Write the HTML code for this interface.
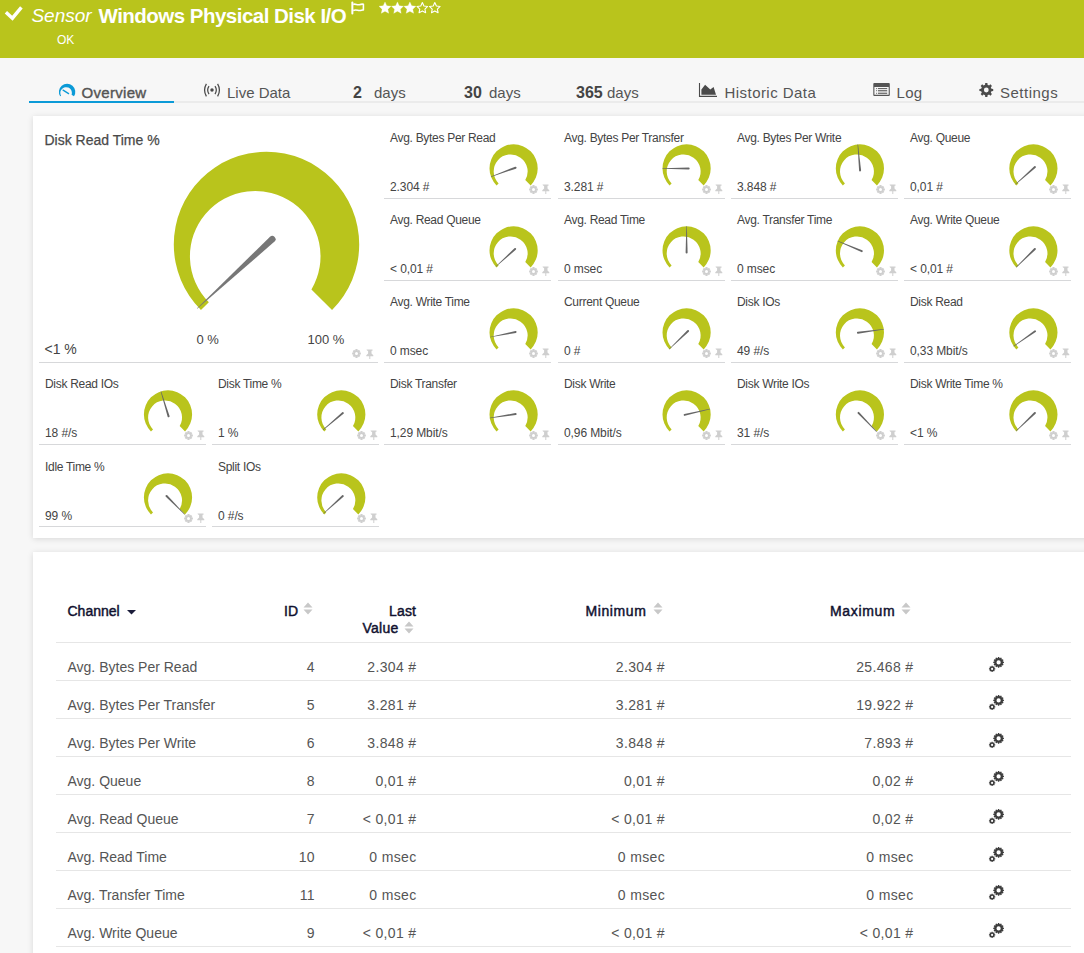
<!DOCTYPE html>
<html><head><meta charset="utf-8"><style>
html,body{margin:0;padding:0}
body{width:1084px;height:953px;overflow:hidden;background:#f7f7f7;position:relative;font-family:"Liberation Sans",sans-serif}
.a{position:absolute;white-space:nowrap;line-height:normal}
#hdr{position:absolute;left:0;top:0;width:1084px;height:58px;background:#b9c41c}
.tab{position:absolute;white-space:nowrap;font-size:15px;color:#555;top:84.4px}
.panel{position:absolute;background:#fff;box-shadow:0 1px 6px rgba(0,0,0,0.13)}
.ln{position:absolute;height:1px;width:167px;background:#d7d8da}
.tt,.tv,.bt,.bv,.bl{position:absolute;white-space:nowrap;color:#444;line-height:normal}
.tt{font-size:12px;letter-spacing:-0.3px}
.tv{font-size:12px;letter-spacing:-0.1px}
.bt{font-size:14px;color:#4a4a4a;-webkit-text-stroke:0.25px #4a4a4a}
.bv{font-size:14px}
.bl{font-size:13px}
.ic{position:absolute;fill:#cfcfcf}
.g{position:absolute;left:0;top:0}
.rc,.rr,.hh{position:absolute;white-space:nowrap;font-size:14px;color:#555;line-height:normal}
.rr{letter-spacing:0.35px}
.hh{color:#10112f;font-weight:normal;-webkit-text-stroke:0.45px #10112f;letter-spacing:0px}
.tl{position:absolute;left:56px;width:1015px;height:1px;background:#e6e6e6}
.sort,.cogs{position:absolute}
</style></head><body>
<div id="hdr"></div>
<svg class="g" width="30" height="25"><path d="M5.9 12.3L12.4 18.2L21.4 7.3" fill="none" stroke="#fff" stroke-width="3.4"/></svg>
<div class="a" style="left:31.4px;top:4.8px;font-size:19px;font-style:italic;color:#fff">Sensor</div>
<div class="a" style="left:98.5px;top:4.0px;font-size:20.5px;font-weight:bold;color:#fff;letter-spacing:-0.52px">Windows Physical Disk I/O</div>
<svg class="a" style="left:350px;top:1px" width="16" height="14" viewBox="0 0 16 14"><path d="M2.35 1.6V12.4" stroke="#fff" stroke-width="2" stroke-linecap="round"/><path d="M3.2 3.4C5.5 2.4 7 4.4 9.3 3.7S12.3 2.9 13.4 3.3V9C12.2 8.5 11 9.9 8.8 9.5S5.5 8.6 3.2 9.4" fill="none" stroke="#fff" stroke-width="1.6" stroke-linejoin="round"/></svg>
<svg class="a" style="left:378.5px;top:1px" width="64" height="14" viewBox="0 0 64 14"><path d="M6.00 0.90 L7.76 4.77 L11.99 5.25 L8.85 8.13 L9.70 12.30 L6.00 10.20 L2.30 12.30 L3.15 8.13 L0.01 5.25 L4.24 4.77Z" fill="#fff" stroke="#fff" stroke-width="0.3" stroke-linejoin="round"/><path d="M18.45 0.90 L20.21 4.77 L24.44 5.25 L21.30 8.13 L22.15 12.30 L18.45 10.20 L14.75 12.30 L15.60 8.13 L12.46 5.25 L16.69 4.77Z" fill="#fff" stroke="#fff" stroke-width="0.3" stroke-linejoin="round"/><path d="M30.90 0.90 L32.66 4.77 L36.89 5.25 L33.75 8.13 L34.60 12.30 L30.90 10.20 L27.20 12.30 L28.05 8.13 L24.91 5.25 L29.14 4.77Z" fill="#fff" stroke="#fff" stroke-width="0.3" stroke-linejoin="round"/><path d="M43.35 1.60 L44.94 5.02 L48.68 5.47 L45.92 8.03 L46.64 11.73 L43.35 9.90 L40.06 11.73 L40.78 8.03 L38.02 5.47 L41.76 5.02Z" fill="none" stroke="#fff" stroke-width="1.1" stroke-linejoin="round"/><path d="M55.80 1.60 L57.39 5.02 L61.13 5.47 L58.37 8.03 L59.09 11.73 L55.80 9.90 L52.51 11.73 L53.23 8.03 L50.47 5.47 L54.21 5.02Z" fill="none" stroke="#fff" stroke-width="1.1" stroke-linejoin="round"/></svg>
<div class="a" style="left:57px;top:32.9px;font-size:12px;color:#fff">OK</div>

<div style="position:absolute;left:29px;top:101px;width:1055px;height:2px;background:#ebebeb"></div>
<div style="position:absolute;left:29px;top:101px;width:145px;height:2px;background:#0b9ad7"></div>
<svg class="g" width="1084" height="953"><path d="M60.22 96.37 A8.20 8.20 0 1 1 73.98 96.37 L71.57 94.80 A5.78 5.78 0 1 0 61.09 95.80 Z" fill="#0b9ad7"/><path d="M63.1 90.1L68.6 93.6" stroke="#0b9ad7" stroke-width="1.3" stroke-linecap="round"/></svg>
<div class="tab" style="left:81.5px;color:#555;-webkit-text-stroke:0.4px #555;letter-spacing:0.3px">Overview</div>
<svg class="g" width="1084" height="953"><circle cx="212" cy="90.1" r="1.75" fill="#4a4a4a"/><path d="M206.4 83.9A12.3 12.3 0 0 0 206.4 96.4M217.6 83.9A12.3 12.3 0 0 1 217.6 96.4M209 86.2A7.1 7.1 0 0 0 209 94.1M215 86.2A7.1 7.1 0 0 1 215 94.1" fill="none" stroke="#4a4a4a" stroke-width="1.25"/></svg>
<div class="tab" style="left:227px">Live Data</div>
<div class="tab" style="left:353px;font-weight:bold;color:#444;font-size:16px;top:83.5px">2</div>
<div class="tab" style="left:374px">days</div>
<div class="tab" style="left:464px;font-weight:bold;color:#444;font-size:16px;top:83.5px">30</div>
<div class="tab" style="left:489px">days</div>
<div class="tab" style="left:576px;font-weight:bold;color:#444;font-size:16px;top:83.5px">365</div>
<div class="tab" style="left:607px">days</div>
<svg class="g" width="1084" height="953"><path d="M699.5 83V96.4H717" fill="none" stroke="#4a4a4a" stroke-width="1.1"/><path d="M701.4 94.7V89.4L705.1 84.8L710.3 89.6L713.6 86.9L716 94.7Z" fill="#4a4a4a"/></svg>
<div class="tab" style="left:724.5px;letter-spacing:0.45px">Historic Data</div>
<svg class="a" style="left:873px;top:83px" width="17" height="13" viewBox="0 0 17 13"><path fill="#555" fill-rule="evenodd" d="M1.2 0H15.8Q16.8 0 16.8 1V12Q16.8 12.9 15.8 12.9H1.2Q0.3 12.9 0.3 12V1Q0.3 0 1.2 0Z M1.4 3.9V11.7H15.7V3.9Z"/><path d="M3.2 5.6h0.9M5 5.6h9.2M3.2 7.7h0.9M5 7.7h9.2M3.2 10.3h0.9M5 10.3h9.2" stroke="#555" stroke-width="1"/><path d="M5 9h9.2" stroke="#bbb" stroke-width="1.4"/></svg>
<div class="tab" style="left:896.5px;letter-spacing:0.3px">Log</div>
<svg class="g" width="1084" height="953"><path fill="#4a4a4a" fill-rule="evenodd" d="M991.45 88.76 L993.21 88.90 L993.21 91.10 L991.45 91.24 L990.82 92.77 L991.96 94.11 L990.41 95.66 L989.07 94.52 L987.54 95.15 L987.40 96.91 L985.20 96.91 L985.06 95.15 L983.53 94.52 L982.19 95.66 L980.64 94.11 L981.78 92.77 L981.15 91.24 L979.39 91.10 L979.39 88.90 L981.15 88.76 L981.78 87.23 L980.64 85.89 L982.19 84.34 L983.53 85.48 L985.06 84.85 L985.20 83.09 L987.40 83.09 L987.54 84.85 L989.07 85.48 L990.41 84.34 L991.96 85.89 L990.82 87.23 Z M988.70 90.00 A2.4 2.4 0 1 0 983.90 90.00 A2.4 2.4 0 1 0 988.70 90.00 Z"/></svg>
<div class="tab" style="left:1000px;letter-spacing:0.5px">Settings</div>

<div class="panel" style="left:33px;top:116px;width:1100px;height:422px"></div>
<div class="panel" style="left:33px;top:552px;width:1100px;height:500px"></div>

<div class="ln" style="left:39px;top:362px;width:339px"></div>
<div class="bt" style="left:44.5px;top:131.9px">Disk Read Time %</div>
<div class="bv" style="left:44.5px;top:341.3px">&lt;1 %</div>
<div class="bl" style="left:196.5px;top:331.8px">0 %</div>
<div class="bl" style="left:307.5px;top:331.8px">100 %</div>
<svg class="ic" style="left:351.5px;top:348.5px" width="9" height="9" viewBox="0 0 9 9"><path fill-rule="evenodd" d="M7.72 3.40 L8.88 3.45 L8.88 5.55 L7.72 5.60 L7.55 6.00 L8.34 6.85 L6.85 8.34 L6.00 7.55 L5.60 7.72 L5.55 8.88 L3.45 8.88 L3.40 7.72 L3.00 7.55 L2.15 8.34 L0.66 6.85 L1.45 6.00 L1.28 5.60 L0.12 5.55 L0.12 3.45 L1.28 3.40 L1.45 3.00 L0.66 2.15 L2.15 0.66 L3.00 1.45 L3.40 1.28 L3.45 0.12 L5.55 0.12 L5.60 1.28 L6.00 1.45 L6.85 0.66 L8.34 2.15 L7.55 3.00 Z M6.00 4.50 A1.5 1.5 0 1 0 3.00 4.50 A1.5 1.5 0 1 0 6.00 4.50 Z"/></svg>
<svg class="ic" style="left:365px;top:348.5px" width="9" height="10" viewBox="0 0 9 10"><path d="M1.5 0.5h6v1.2h-1v2.8l1.8 1.8v1h-3v2.7h-1V7.3h-3v-1l1.8-1.8V1.7h-1z"/></svg>
<svg class="g" width="1084" height="953"><path d="M200.95 310.05 A92.70 92.70 0 1 1 332.05 310.05 L311.44 289.44 A65.29 65.29 0 1 0 208.84 302.16 Z" fill="#b9c41c"/><path d="M270.03 236.70 L196.84 308.44 L197.18 308.81 L274.55 241.61 A3.34 3.34 0 0 0 270.03 236.70 Z" fill="#777777"/></svg>
<div class="ln" style="left:384.0px;top:198px"></div>
<div class="tt" style="left:390.0px;top:130.9px">Avg. Bytes Per Read</div>
<div class="tv" style="left:390.0px;top:180.0px">2.304 #</div>
<svg class="ic" style="left:529.4px;top:184.7px" width="9" height="9" viewBox="0 0 9 9"><path fill-rule="evenodd" d="M7.72 3.40 L8.88 3.45 L8.88 5.55 L7.72 5.60 L7.55 6.00 L8.34 6.85 L6.85 8.34 L6.00 7.55 L5.60 7.72 L5.55 8.88 L3.45 8.88 L3.40 7.72 L3.00 7.55 L2.15 8.34 L0.66 6.85 L1.45 6.00 L1.28 5.60 L0.12 5.55 L0.12 3.45 L1.28 3.40 L1.45 3.00 L0.66 2.15 L2.15 0.66 L3.00 1.45 L3.40 1.28 L3.45 0.12 L5.55 0.12 L5.60 1.28 L6.00 1.45 L6.85 0.66 L8.34 2.15 L7.55 3.00 Z M6.00 4.50 A1.5 1.5 0 1 0 3.00 4.50 A1.5 1.5 0 1 0 6.00 4.50 Z"/></svg>
<svg class="ic" style="left:541.2px;top:183.9px" width="9" height="10" viewBox="0 0 9 10"><path d="M1.5 0.5h6v1.2h-1v2.8l1.8 1.8v1h-3v2.7h-1V7.3h-3v-1l1.8-1.8V1.7h-1z"/></svg>
<svg class="g" width="1084" height="953"><path d="M496.56 185.44 A24.10 24.10 0 1 1 530.64 185.44 L525.28 180.08 A16.97 16.97 0 1 0 498.61 183.39 Z" fill="#b9c41c"/><path d="M515.18 166.76 L490.87 176.41 L491.04 176.88 L515.87 168.64 A1.00 1.00 0 0 0 515.18 166.76 Z" fill="#666"/></svg>
<div class="ln" style="left:558.0px;top:198px"></div>
<div class="tt" style="left:564.0px;top:130.9px">Avg. Bytes Per Transfer</div>
<div class="tv" style="left:564.0px;top:180.0px">3.281 #</div>
<svg class="ic" style="left:702.4px;top:184.7px" width="9" height="9" viewBox="0 0 9 9"><path fill-rule="evenodd" d="M7.72 3.40 L8.88 3.45 L8.88 5.55 L7.72 5.60 L7.55 6.00 L8.34 6.85 L6.85 8.34 L6.00 7.55 L5.60 7.72 L5.55 8.88 L3.45 8.88 L3.40 7.72 L3.00 7.55 L2.15 8.34 L0.66 6.85 L1.45 6.00 L1.28 5.60 L0.12 5.55 L0.12 3.45 L1.28 3.40 L1.45 3.00 L0.66 2.15 L2.15 0.66 L3.00 1.45 L3.40 1.28 L3.45 0.12 L5.55 0.12 L5.60 1.28 L6.00 1.45 L6.85 0.66 L8.34 2.15 L7.55 3.00 Z M6.00 4.50 A1.5 1.5 0 1 0 3.00 4.50 A1.5 1.5 0 1 0 6.00 4.50 Z"/></svg>
<svg class="ic" style="left:714.2px;top:183.9px" width="9" height="10" viewBox="0 0 9 10"><path d="M1.5 0.5h6v1.2h-1v2.8l1.8 1.8v1h-3v2.7h-1V7.3h-3v-1l1.8-1.8V1.7h-1z"/></svg>
<svg class="g" width="1084" height="953"><path d="M669.56 185.44 A24.10 24.10 0 1 1 703.64 185.44 L698.28 180.08 A16.97 16.97 0 1 0 671.61 183.39 Z" fill="#b9c41c"/><path d="M688.65 167.40 L662.50 168.15 L662.50 168.65 L688.65 169.40 A1.00 1.00 0 0 0 688.65 167.40 Z" fill="#666"/></svg>
<div class="ln" style="left:731.0px;top:198px"></div>
<div class="tt" style="left:737.0px;top:130.9px">Avg. Bytes Per Write</div>
<div class="tv" style="left:737.0px;top:180.0px">3.848 #</div>
<svg class="ic" style="left:875.7px;top:184.7px" width="9" height="9" viewBox="0 0 9 9"><path fill-rule="evenodd" d="M7.72 3.40 L8.88 3.45 L8.88 5.55 L7.72 5.60 L7.55 6.00 L8.34 6.85 L6.85 8.34 L6.00 7.55 L5.60 7.72 L5.55 8.88 L3.45 8.88 L3.40 7.72 L3.00 7.55 L2.15 8.34 L0.66 6.85 L1.45 6.00 L1.28 5.60 L0.12 5.55 L0.12 3.45 L1.28 3.40 L1.45 3.00 L0.66 2.15 L2.15 0.66 L3.00 1.45 L3.40 1.28 L3.45 0.12 L5.55 0.12 L5.60 1.28 L6.00 1.45 L6.85 0.66 L8.34 2.15 L7.55 3.00 Z M6.00 4.50 A1.5 1.5 0 1 0 3.00 4.50 A1.5 1.5 0 1 0 6.00 4.50 Z"/></svg>
<svg class="ic" style="left:887.5px;top:183.9px" width="9" height="10" viewBox="0 0 9 10"><path d="M1.5 0.5h6v1.2h-1v2.8l1.8 1.8v1h-3v2.7h-1V7.3h-3v-1l1.8-1.8V1.7h-1z"/></svg>
<svg class="g" width="1084" height="953"><path d="M842.86 185.44 A24.10 24.10 0 1 1 876.94 185.44 L871.58 180.08 A16.97 16.97 0 1 0 844.91 183.39 Z" fill="#b9c41c"/><path d="M861.07 170.35 L858.05 144.37 L857.55 144.41 L859.08 170.53 A1.00 1.00 0 0 0 861.07 170.35 Z" fill="#666"/></svg>
<div class="ln" style="left:904.0px;top:198px"></div>
<div class="tt" style="left:910.0px;top:130.9px">Avg. Queue</div>
<div class="tv" style="left:910.0px;top:180.0px">0,01 #</div>
<svg class="ic" style="left:1049.2px;top:184.7px" width="9" height="9" viewBox="0 0 9 9"><path fill-rule="evenodd" d="M7.72 3.40 L8.88 3.45 L8.88 5.55 L7.72 5.60 L7.55 6.00 L8.34 6.85 L6.85 8.34 L6.00 7.55 L5.60 7.72 L5.55 8.88 L3.45 8.88 L3.40 7.72 L3.00 7.55 L2.15 8.34 L0.66 6.85 L1.45 6.00 L1.28 5.60 L0.12 5.55 L0.12 3.45 L1.28 3.40 L1.45 3.00 L0.66 2.15 L2.15 0.66 L3.00 1.45 L3.40 1.28 L3.45 0.12 L5.55 0.12 L5.60 1.28 L6.00 1.45 L6.85 0.66 L8.34 2.15 L7.55 3.00 Z M6.00 4.50 A1.5 1.5 0 1 0 3.00 4.50 A1.5 1.5 0 1 0 6.00 4.50 Z"/></svg>
<svg class="ic" style="left:1061.0px;top:183.9px" width="9" height="10" viewBox="0 0 9 10"><path d="M1.5 0.5h6v1.2h-1v2.8l1.8 1.8v1h-3v2.7h-1V7.3h-3v-1l1.8-1.8V1.7h-1z"/></svg>
<svg class="g" width="1084" height="953"><path d="M1016.36 185.44 A24.10 24.10 0 1 1 1050.44 185.44 L1045.08 180.08 A16.97 16.97 0 1 0 1018.41 183.39 Z" fill="#b9c41c"/><path d="M1034.27 166.29 L1015.18 184.18 L1015.52 184.56 L1035.60 167.79 A1.00 1.00 0 0 0 1034.27 166.29 Z" fill="#666"/></svg>
<div class="ln" style="left:384.0px;top:280px"></div>
<div class="tt" style="left:390.0px;top:212.9px">Avg. Read Queue</div>
<div class="tv" style="left:390.0px;top:262.0px">&lt; 0,01 #</div>
<svg class="ic" style="left:529.4px;top:266.7px" width="9" height="9" viewBox="0 0 9 9"><path fill-rule="evenodd" d="M7.72 3.40 L8.88 3.45 L8.88 5.55 L7.72 5.60 L7.55 6.00 L8.34 6.85 L6.85 8.34 L6.00 7.55 L5.60 7.72 L5.55 8.88 L3.45 8.88 L3.40 7.72 L3.00 7.55 L2.15 8.34 L0.66 6.85 L1.45 6.00 L1.28 5.60 L0.12 5.55 L0.12 3.45 L1.28 3.40 L1.45 3.00 L0.66 2.15 L2.15 0.66 L3.00 1.45 L3.40 1.28 L3.45 0.12 L5.55 0.12 L5.60 1.28 L6.00 1.45 L6.85 0.66 L8.34 2.15 L7.55 3.00 Z M6.00 4.50 A1.5 1.5 0 1 0 3.00 4.50 A1.5 1.5 0 1 0 6.00 4.50 Z"/></svg>
<svg class="ic" style="left:541.2px;top:265.9px" width="9" height="10" viewBox="0 0 9 10"><path d="M1.5 0.5h6v1.2h-1v2.8l1.8 1.8v1h-3v2.7h-1V7.3h-3v-1l1.8-1.8V1.7h-1z"/></svg>
<svg class="g" width="1084" height="953"><path d="M496.56 267.44 A24.10 24.10 0 1 1 530.64 267.44 L525.28 262.08 A16.97 16.97 0 1 0 498.61 265.39 Z" fill="#b9c41c"/><path d="M514.44 248.28 L495.61 266.43 L495.94 266.80 L515.79 249.76 A1.00 1.00 0 0 0 514.44 248.28 Z" fill="#666"/></svg>
<div class="ln" style="left:558.0px;top:280px"></div>
<div class="tt" style="left:564.0px;top:212.9px">Avg. Read Time</div>
<div class="tv" style="left:564.0px;top:262.0px">0 msec</div>
<svg class="ic" style="left:702.4px;top:266.7px" width="9" height="9" viewBox="0 0 9 9"><path fill-rule="evenodd" d="M7.72 3.40 L8.88 3.45 L8.88 5.55 L7.72 5.60 L7.55 6.00 L8.34 6.85 L6.85 8.34 L6.00 7.55 L5.60 7.72 L5.55 8.88 L3.45 8.88 L3.40 7.72 L3.00 7.55 L2.15 8.34 L0.66 6.85 L1.45 6.00 L1.28 5.60 L0.12 5.55 L0.12 3.45 L1.28 3.40 L1.45 3.00 L0.66 2.15 L2.15 0.66 L3.00 1.45 L3.40 1.28 L3.45 0.12 L5.55 0.12 L5.60 1.28 L6.00 1.45 L6.85 0.66 L8.34 2.15 L7.55 3.00 Z M6.00 4.50 A1.5 1.5 0 1 0 3.00 4.50 A1.5 1.5 0 1 0 6.00 4.50 Z"/></svg>
<svg class="ic" style="left:714.2px;top:265.9px" width="9" height="10" viewBox="0 0 9 10"><path d="M1.5 0.5h6v1.2h-1v2.8l1.8 1.8v1h-3v2.7h-1V7.3h-3v-1l1.8-1.8V1.7h-1z"/></svg>
<svg class="g" width="1084" height="953"><path d="M669.56 267.44 A24.10 24.10 0 1 1 703.64 267.44 L698.28 262.08 A16.97 16.97 0 1 0 671.61 265.39 Z" fill="#b9c41c"/><path d="M687.60 252.45 L686.85 226.30 L686.35 226.30 L685.60 252.45 A1.00 1.00 0 0 0 687.60 252.45 Z" fill="#666"/></svg>
<div class="ln" style="left:731.0px;top:280px"></div>
<div class="tt" style="left:737.0px;top:212.9px">Avg. Transfer Time</div>
<div class="tv" style="left:737.0px;top:262.0px">0 msec</div>
<svg class="ic" style="left:875.7px;top:266.7px" width="9" height="9" viewBox="0 0 9 9"><path fill-rule="evenodd" d="M7.72 3.40 L8.88 3.45 L8.88 5.55 L7.72 5.60 L7.55 6.00 L8.34 6.85 L6.85 8.34 L6.00 7.55 L5.60 7.72 L5.55 8.88 L3.45 8.88 L3.40 7.72 L3.00 7.55 L2.15 8.34 L0.66 6.85 L1.45 6.00 L1.28 5.60 L0.12 5.55 L0.12 3.45 L1.28 3.40 L1.45 3.00 L0.66 2.15 L2.15 0.66 L3.00 1.45 L3.40 1.28 L3.45 0.12 L5.55 0.12 L5.60 1.28 L6.00 1.45 L6.85 0.66 L8.34 2.15 L7.55 3.00 Z M6.00 4.50 A1.5 1.5 0 1 0 3.00 4.50 A1.5 1.5 0 1 0 6.00 4.50 Z"/></svg>
<svg class="ic" style="left:887.5px;top:265.9px" width="9" height="10" viewBox="0 0 9 10"><path d="M1.5 0.5h6v1.2h-1v2.8l1.8 1.8v1h-3v2.7h-1V7.3h-3v-1l1.8-1.8V1.7h-1z"/></svg>
<svg class="g" width="1084" height="953"><path d="M842.86 267.44 A24.10 24.10 0 1 1 876.94 267.44 L871.58 262.08 A16.97 16.97 0 1 0 844.91 265.39 Z" fill="#b9c41c"/><path d="M862.18 250.27 L837.76 240.87 L837.57 241.33 L861.40 252.11 A1.00 1.00 0 0 0 862.18 250.27 Z" fill="#666"/></svg>
<div class="ln" style="left:904.0px;top:280px"></div>
<div class="tt" style="left:910.0px;top:212.9px">Avg. Write Queue</div>
<div class="tv" style="left:910.0px;top:262.0px">&lt; 0,01 #</div>
<svg class="ic" style="left:1049.2px;top:266.7px" width="9" height="9" viewBox="0 0 9 9"><path fill-rule="evenodd" d="M7.72 3.40 L8.88 3.45 L8.88 5.55 L7.72 5.60 L7.55 6.00 L8.34 6.85 L6.85 8.34 L6.00 7.55 L5.60 7.72 L5.55 8.88 L3.45 8.88 L3.40 7.72 L3.00 7.55 L2.15 8.34 L0.66 6.85 L1.45 6.00 L1.28 5.60 L0.12 5.55 L0.12 3.45 L1.28 3.40 L1.45 3.00 L0.66 2.15 L2.15 0.66 L3.00 1.45 L3.40 1.28 L3.45 0.12 L5.55 0.12 L5.60 1.28 L6.00 1.45 L6.85 0.66 L8.34 2.15 L7.55 3.00 Z M6.00 4.50 A1.5 1.5 0 1 0 3.00 4.50 A1.5 1.5 0 1 0 6.00 4.50 Z"/></svg>
<svg class="ic" style="left:1061.0px;top:265.9px" width="9" height="10" viewBox="0 0 9 10"><path d="M1.5 0.5h6v1.2h-1v2.8l1.8 1.8v1h-3v2.7h-1V7.3h-3v-1l1.8-1.8V1.7h-1z"/></svg>
<svg class="g" width="1084" height="953"><path d="M1016.36 267.44 A24.10 24.10 0 1 1 1050.44 267.44 L1045.08 262.08 A16.97 16.97 0 1 0 1018.41 265.39 Z" fill="#b9c41c"/><path d="M1034.16 248.25 L1016.04 267.11 L1016.39 267.47 L1035.56 249.68 A1.00 1.00 0 0 0 1034.16 248.25 Z" fill="#666"/></svg>
<div class="ln" style="left:384.0px;top:362px"></div>
<div class="tt" style="left:390.0px;top:294.9px">Avg. Write Time</div>
<div class="tv" style="left:390.0px;top:344.0px">0 msec</div>
<svg class="ic" style="left:529.4px;top:348.7px" width="9" height="9" viewBox="0 0 9 9"><path fill-rule="evenodd" d="M7.72 3.40 L8.88 3.45 L8.88 5.55 L7.72 5.60 L7.55 6.00 L8.34 6.85 L6.85 8.34 L6.00 7.55 L5.60 7.72 L5.55 8.88 L3.45 8.88 L3.40 7.72 L3.00 7.55 L2.15 8.34 L0.66 6.85 L1.45 6.00 L1.28 5.60 L0.12 5.55 L0.12 3.45 L1.28 3.40 L1.45 3.00 L0.66 2.15 L2.15 0.66 L3.00 1.45 L3.40 1.28 L3.45 0.12 L5.55 0.12 L5.60 1.28 L6.00 1.45 L6.85 0.66 L8.34 2.15 L7.55 3.00 Z M6.00 4.50 A1.5 1.5 0 1 0 3.00 4.50 A1.5 1.5 0 1 0 6.00 4.50 Z"/></svg>
<svg class="ic" style="left:541.2px;top:347.9px" width="9" height="10" viewBox="0 0 9 10"><path d="M1.5 0.5h6v1.2h-1v2.8l1.8 1.8v1h-3v2.7h-1V7.3h-3v-1l1.8-1.8V1.7h-1z"/></svg>
<svg class="g" width="1084" height="953"><path d="M496.56 349.44 A24.10 24.10 0 1 1 530.64 349.44 L525.28 344.08 A16.97 16.97 0 1 0 498.61 347.39 Z" fill="#b9c41c"/><path d="M515.41 331.02 L489.92 336.88 L490.02 337.37 L515.80 332.98 A1.00 1.00 0 0 0 515.41 331.02 Z" fill="#666"/></svg>
<div class="ln" style="left:558.0px;top:362px"></div>
<div class="tt" style="left:564.0px;top:294.9px">Current Queue</div>
<div class="tv" style="left:564.0px;top:344.0px">0 #</div>
<svg class="ic" style="left:702.4px;top:348.7px" width="9" height="9" viewBox="0 0 9 9"><path fill-rule="evenodd" d="M7.72 3.40 L8.88 3.45 L8.88 5.55 L7.72 5.60 L7.55 6.00 L8.34 6.85 L6.85 8.34 L6.00 7.55 L5.60 7.72 L5.55 8.88 L3.45 8.88 L3.40 7.72 L3.00 7.55 L2.15 8.34 L0.66 6.85 L1.45 6.00 L1.28 5.60 L0.12 5.55 L0.12 3.45 L1.28 3.40 L1.45 3.00 L0.66 2.15 L2.15 0.66 L3.00 1.45 L3.40 1.28 L3.45 0.12 L5.55 0.12 L5.60 1.28 L6.00 1.45 L6.85 0.66 L8.34 2.15 L7.55 3.00 Z M6.00 4.50 A1.5 1.5 0 1 0 3.00 4.50 A1.5 1.5 0 1 0 6.00 4.50 Z"/></svg>
<svg class="ic" style="left:714.2px;top:347.9px" width="9" height="10" viewBox="0 0 9 10"><path d="M1.5 0.5h6v1.2h-1v2.8l1.8 1.8v1h-3v2.7h-1V7.3h-3v-1l1.8-1.8V1.7h-1z"/></svg>
<svg class="g" width="1084" height="953"><path d="M669.56 349.44 A24.10 24.10 0 1 1 703.64 349.44 L698.28 344.08 A16.97 16.97 0 1 0 671.61 347.39 Z" fill="#b9c41c"/><path d="M687.38 330.26 L669.09 348.96 L669.44 349.32 L688.77 331.70 A1.00 1.00 0 0 0 687.38 330.26 Z" fill="#666"/></svg>
<div class="ln" style="left:731.0px;top:362px"></div>
<div class="tt" style="left:737.0px;top:294.9px">Disk IOs</div>
<div class="tv" style="left:737.0px;top:344.0px">49 #/s</div>
<svg class="ic" style="left:875.7px;top:348.7px" width="9" height="9" viewBox="0 0 9 9"><path fill-rule="evenodd" d="M7.72 3.40 L8.88 3.45 L8.88 5.55 L7.72 5.60 L7.55 6.00 L8.34 6.85 L6.85 8.34 L6.00 7.55 L5.60 7.72 L5.55 8.88 L3.45 8.88 L3.40 7.72 L3.00 7.55 L2.15 8.34 L0.66 6.85 L1.45 6.00 L1.28 5.60 L0.12 5.55 L0.12 3.45 L1.28 3.40 L1.45 3.00 L0.66 2.15 L2.15 0.66 L3.00 1.45 L3.40 1.28 L3.45 0.12 L5.55 0.12 L5.60 1.28 L6.00 1.45 L6.85 0.66 L8.34 2.15 L7.55 3.00 Z M6.00 4.50 A1.5 1.5 0 1 0 3.00 4.50 A1.5 1.5 0 1 0 6.00 4.50 Z"/></svg>
<svg class="ic" style="left:887.5px;top:347.9px" width="9" height="10" viewBox="0 0 9 10"><path d="M1.5 0.5h6v1.2h-1v2.8l1.8 1.8v1h-3v2.7h-1V7.3h-3v-1l1.8-1.8V1.7h-1z"/></svg>
<svg class="g" width="1084" height="953"><path d="M842.86 349.44 A24.10 24.10 0 1 1 876.94 349.44 L871.58 344.08 A16.97 16.97 0 1 0 844.91 347.39 Z" fill="#b9c41c"/><path d="M858.00 333.66 L883.82 329.46 L883.76 328.96 L857.74 331.68 A1.00 1.00 0 0 0 858.00 333.66 Z" fill="#666"/></svg>
<div class="ln" style="left:904.0px;top:362px"></div>
<div class="tt" style="left:910.0px;top:294.9px">Disk Read</div>
<div class="tv" style="left:910.0px;top:344.0px">0,33 Mbit/s</div>
<svg class="ic" style="left:1049.2px;top:348.7px" width="9" height="9" viewBox="0 0 9 9"><path fill-rule="evenodd" d="M7.72 3.40 L8.88 3.45 L8.88 5.55 L7.72 5.60 L7.55 6.00 L8.34 6.85 L6.85 8.34 L6.00 7.55 L5.60 7.72 L5.55 8.88 L3.45 8.88 L3.40 7.72 L3.00 7.55 L2.15 8.34 L0.66 6.85 L1.45 6.00 L1.28 5.60 L0.12 5.55 L0.12 3.45 L1.28 3.40 L1.45 3.00 L0.66 2.15 L2.15 0.66 L3.00 1.45 L3.40 1.28 L3.45 0.12 L5.55 0.12 L5.60 1.28 L6.00 1.45 L6.85 0.66 L8.34 2.15 L7.55 3.00 Z M6.00 4.50 A1.5 1.5 0 1 0 3.00 4.50 A1.5 1.5 0 1 0 6.00 4.50 Z"/></svg>
<svg class="ic" style="left:1061.0px;top:347.9px" width="9" height="10" viewBox="0 0 9 10"><path d="M1.5 0.5h6v1.2h-1v2.8l1.8 1.8v1h-3v2.7h-1V7.3h-3v-1l1.8-1.8V1.7h-1z"/></svg>
<svg class="g" width="1084" height="953"><path d="M1016.36 349.44 A24.10 24.10 0 1 1 1050.44 349.44 L1045.08 344.08 A16.97 16.97 0 1 0 1018.41 347.39 Z" fill="#b9c41c"/><path d="M1034.50 330.41 L1013.52 346.02 L1013.80 346.43 L1035.65 332.04 A1.00 1.00 0 0 0 1034.50 330.41 Z" fill="#666"/></svg>
<div class="ln" style="left:39.0px;top:444px"></div>
<div class="tt" style="left:45.0px;top:376.9px">Disk Read IOs</div>
<div class="tv" style="left:45.0px;top:426.0px">18 #/s</div>
<svg class="ic" style="left:183.8px;top:430.7px" width="9" height="9" viewBox="0 0 9 9"><path fill-rule="evenodd" d="M7.72 3.40 L8.88 3.45 L8.88 5.55 L7.72 5.60 L7.55 6.00 L8.34 6.85 L6.85 8.34 L6.00 7.55 L5.60 7.72 L5.55 8.88 L3.45 8.88 L3.40 7.72 L3.00 7.55 L2.15 8.34 L0.66 6.85 L1.45 6.00 L1.28 5.60 L0.12 5.55 L0.12 3.45 L1.28 3.40 L1.45 3.00 L0.66 2.15 L2.15 0.66 L3.00 1.45 L3.40 1.28 L3.45 0.12 L5.55 0.12 L5.60 1.28 L6.00 1.45 L6.85 0.66 L8.34 2.15 L7.55 3.00 Z M6.00 4.50 A1.5 1.5 0 1 0 3.00 4.50 A1.5 1.5 0 1 0 6.00 4.50 Z"/></svg>
<svg class="ic" style="left:195.6px;top:429.9px" width="9" height="10" viewBox="0 0 9 10"><path d="M1.5 0.5h6v1.2h-1v2.8l1.8 1.8v1h-3v2.7h-1V7.3h-3v-1l1.8-1.8V1.7h-1z"/></svg>
<svg class="g" width="1084" height="953"><path d="M150.96 431.44 A24.10 24.10 0 1 1 185.04 431.44 L179.68 426.08 A16.97 16.97 0 1 0 153.01 429.39 Z" fill="#b9c41c"/><path d="M169.56 416.06 L161.15 391.29 L160.67 391.44 L167.65 416.65 A1.00 1.00 0 0 0 169.56 416.06 Z" fill="#666"/></svg>
<div class="ln" style="left:212.0px;top:444px"></div>
<div class="tt" style="left:218.0px;top:376.9px">Disk Time %</div>
<div class="tv" style="left:218.0px;top:426.0px">1 %</div>
<svg class="ic" style="left:357.1px;top:430.7px" width="9" height="9" viewBox="0 0 9 9"><path fill-rule="evenodd" d="M7.72 3.40 L8.88 3.45 L8.88 5.55 L7.72 5.60 L7.55 6.00 L8.34 6.85 L6.85 8.34 L6.00 7.55 L5.60 7.72 L5.55 8.88 L3.45 8.88 L3.40 7.72 L3.00 7.55 L2.15 8.34 L0.66 6.85 L1.45 6.00 L1.28 5.60 L0.12 5.55 L0.12 3.45 L1.28 3.40 L1.45 3.00 L0.66 2.15 L2.15 0.66 L3.00 1.45 L3.40 1.28 L3.45 0.12 L5.55 0.12 L5.60 1.28 L6.00 1.45 L6.85 0.66 L8.34 2.15 L7.55 3.00 Z M6.00 4.50 A1.5 1.5 0 1 0 3.00 4.50 A1.5 1.5 0 1 0 6.00 4.50 Z"/></svg>
<svg class="ic" style="left:368.9px;top:429.9px" width="9" height="10" viewBox="0 0 9 10"><path d="M1.5 0.5h6v1.2h-1v2.8l1.8 1.8v1h-3v2.7h-1V7.3h-3v-1l1.8-1.8V1.7h-1z"/></svg>
<svg class="g" width="1084" height="953"><path d="M324.26 431.44 A24.10 24.10 0 1 1 358.34 431.44 L352.98 426.08 A16.97 16.97 0 1 0 326.31 429.39 Z" fill="#b9c41c"/><path d="M342.22 412.31 L322.76 429.80 L323.08 430.18 L343.51 413.84 A1.00 1.00 0 0 0 342.22 412.31 Z" fill="#666"/></svg>
<div class="ln" style="left:384.0px;top:444px"></div>
<div class="tt" style="left:390.0px;top:376.9px">Disk Transfer</div>
<div class="tv" style="left:390.0px;top:426.0px">1,29 Mbit/s</div>
<svg class="ic" style="left:529.4px;top:430.7px" width="9" height="9" viewBox="0 0 9 9"><path fill-rule="evenodd" d="M7.72 3.40 L8.88 3.45 L8.88 5.55 L7.72 5.60 L7.55 6.00 L8.34 6.85 L6.85 8.34 L6.00 7.55 L5.60 7.72 L5.55 8.88 L3.45 8.88 L3.40 7.72 L3.00 7.55 L2.15 8.34 L0.66 6.85 L1.45 6.00 L1.28 5.60 L0.12 5.55 L0.12 3.45 L1.28 3.40 L1.45 3.00 L0.66 2.15 L2.15 0.66 L3.00 1.45 L3.40 1.28 L3.45 0.12 L5.55 0.12 L5.60 1.28 L6.00 1.45 L6.85 0.66 L8.34 2.15 L7.55 3.00 Z M6.00 4.50 A1.5 1.5 0 1 0 3.00 4.50 A1.5 1.5 0 1 0 6.00 4.50 Z"/></svg>
<svg class="ic" style="left:541.2px;top:429.9px" width="9" height="10" viewBox="0 0 9 10"><path d="M1.5 0.5h6v1.2h-1v2.8l1.8 1.8v1h-3v2.7h-1V7.3h-3v-1l1.8-1.8V1.7h-1z"/></svg>
<svg class="g" width="1084" height="953"><path d="M496.56 431.44 A24.10 24.10 0 1 1 530.64 431.44 L525.28 426.08 A16.97 16.97 0 1 0 498.61 429.39 Z" fill="#b9c41c"/><path d="M515.48 413.11 L489.73 417.71 L489.80 418.21 L515.77 415.09 A1.00 1.00 0 0 0 515.48 413.11 Z" fill="#666"/></svg>
<div class="ln" style="left:558.0px;top:444px"></div>
<div class="tt" style="left:564.0px;top:376.9px">Disk Write</div>
<div class="tv" style="left:564.0px;top:426.0px">0,96 Mbit/s</div>
<svg class="ic" style="left:702.4px;top:430.7px" width="9" height="9" viewBox="0 0 9 9"><path fill-rule="evenodd" d="M7.72 3.40 L8.88 3.45 L8.88 5.55 L7.72 5.60 L7.55 6.00 L8.34 6.85 L6.85 8.34 L6.00 7.55 L5.60 7.72 L5.55 8.88 L3.45 8.88 L3.40 7.72 L3.00 7.55 L2.15 8.34 L0.66 6.85 L1.45 6.00 L1.28 5.60 L0.12 5.55 L0.12 3.45 L1.28 3.40 L1.45 3.00 L0.66 2.15 L2.15 0.66 L3.00 1.45 L3.40 1.28 L3.45 0.12 L5.55 0.12 L5.60 1.28 L6.00 1.45 L6.85 0.66 L8.34 2.15 L7.55 3.00 Z M6.00 4.50 A1.5 1.5 0 1 0 3.00 4.50 A1.5 1.5 0 1 0 6.00 4.50 Z"/></svg>
<svg class="ic" style="left:714.2px;top:429.9px" width="9" height="10" viewBox="0 0 9 10"><path d="M1.5 0.5h6v1.2h-1v2.8l1.8 1.8v1h-3v2.7h-1V7.3h-3v-1l1.8-1.8V1.7h-1z"/></svg>
<svg class="g" width="1084" height="953"><path d="M669.56 431.44 A24.10 24.10 0 1 1 703.64 431.44 L698.28 426.08 A16.97 16.97 0 1 0 671.61 429.39 Z" fill="#b9c41c"/><path d="M684.83 415.84 L710.14 409.22 L710.03 408.74 L684.38 413.89 A1.00 1.00 0 0 0 684.83 415.84 Z" fill="#666"/></svg>
<div class="ln" style="left:731.0px;top:444px"></div>
<div class="tt" style="left:737.0px;top:376.9px">Disk Write IOs</div>
<div class="tv" style="left:737.0px;top:426.0px">31 #/s</div>
<svg class="ic" style="left:875.7px;top:430.7px" width="9" height="9" viewBox="0 0 9 9"><path fill-rule="evenodd" d="M7.72 3.40 L8.88 3.45 L8.88 5.55 L7.72 5.60 L7.55 6.00 L8.34 6.85 L6.85 8.34 L6.00 7.55 L5.60 7.72 L5.55 8.88 L3.45 8.88 L3.40 7.72 L3.00 7.55 L2.15 8.34 L0.66 6.85 L1.45 6.00 L1.28 5.60 L0.12 5.55 L0.12 3.45 L1.28 3.40 L1.45 3.00 L0.66 2.15 L2.15 0.66 L3.00 1.45 L3.40 1.28 L3.45 0.12 L5.55 0.12 L5.60 1.28 L6.00 1.45 L6.85 0.66 L8.34 2.15 L7.55 3.00 Z M6.00 4.50 A1.5 1.5 0 1 0 3.00 4.50 A1.5 1.5 0 1 0 6.00 4.50 Z"/></svg>
<svg class="ic" style="left:887.5px;top:429.9px" width="9" height="10" viewBox="0 0 9 10"><path d="M1.5 0.5h6v1.2h-1v2.8l1.8 1.8v1h-3v2.7h-1V7.3h-3v-1l1.8-1.8V1.7h-1z"/></svg>
<svg class="g" width="1084" height="953"><path d="M842.86 431.44 A24.10 24.10 0 1 1 876.94 431.44 L871.58 426.08 A16.97 16.97 0 1 0 844.91 429.39 Z" fill="#b9c41c"/><path d="M857.76 413.62 L876.46 431.91 L876.82 431.56 L859.20 412.23 A1.00 1.00 0 0 0 857.76 413.62 Z" fill="#666"/></svg>
<div class="ln" style="left:904.0px;top:444px"></div>
<div class="tt" style="left:910.0px;top:376.9px">Disk Write Time %</div>
<div class="tv" style="left:910.0px;top:426.0px">&lt;1 %</div>
<svg class="ic" style="left:1049.2px;top:430.7px" width="9" height="9" viewBox="0 0 9 9"><path fill-rule="evenodd" d="M7.72 3.40 L8.88 3.45 L8.88 5.55 L7.72 5.60 L7.55 6.00 L8.34 6.85 L6.85 8.34 L6.00 7.55 L5.60 7.72 L5.55 8.88 L3.45 8.88 L3.40 7.72 L3.00 7.55 L2.15 8.34 L0.66 6.85 L1.45 6.00 L1.28 5.60 L0.12 5.55 L0.12 3.45 L1.28 3.40 L1.45 3.00 L0.66 2.15 L2.15 0.66 L3.00 1.45 L3.40 1.28 L3.45 0.12 L5.55 0.12 L5.60 1.28 L6.00 1.45 L6.85 0.66 L8.34 2.15 L7.55 3.00 Z M6.00 4.50 A1.5 1.5 0 1 0 3.00 4.50 A1.5 1.5 0 1 0 6.00 4.50 Z"/></svg>
<svg class="ic" style="left:1061.0px;top:429.9px" width="9" height="10" viewBox="0 0 9 10"><path d="M1.5 0.5h6v1.2h-1v2.8l1.8 1.8v1h-3v2.7h-1V7.3h-3v-1l1.8-1.8V1.7h-1z"/></svg>
<svg class="g" width="1084" height="953"><path d="M1016.36 431.44 A24.10 24.10 0 1 1 1050.44 431.44 L1045.08 426.08 A16.97 16.97 0 1 0 1018.41 429.39 Z" fill="#b9c41c"/><path d="M1034.18 412.26 L1015.89 430.96 L1016.24 431.32 L1035.57 413.70 A1.00 1.00 0 0 0 1034.18 412.26 Z" fill="#666"/></svg>
<div class="ln" style="left:39.0px;top:526px"></div>
<div class="tt" style="left:45.0px;top:459.9px">Idle Time %</div>
<div class="tv" style="left:45.0px;top:509.0px">99 %</div>
<svg class="ic" style="left:183.8px;top:513.7px" width="9" height="9" viewBox="0 0 9 9"><path fill-rule="evenodd" d="M7.72 3.40 L8.88 3.45 L8.88 5.55 L7.72 5.60 L7.55 6.00 L8.34 6.85 L6.85 8.34 L6.00 7.55 L5.60 7.72 L5.55 8.88 L3.45 8.88 L3.40 7.72 L3.00 7.55 L2.15 8.34 L0.66 6.85 L1.45 6.00 L1.28 5.60 L0.12 5.55 L0.12 3.45 L1.28 3.40 L1.45 3.00 L0.66 2.15 L2.15 0.66 L3.00 1.45 L3.40 1.28 L3.45 0.12 L5.55 0.12 L5.60 1.28 L6.00 1.45 L6.85 0.66 L8.34 2.15 L7.55 3.00 Z M6.00 4.50 A1.5 1.5 0 1 0 3.00 4.50 A1.5 1.5 0 1 0 6.00 4.50 Z"/></svg>
<svg class="ic" style="left:195.6px;top:512.9px" width="9" height="10" viewBox="0 0 9 10"><path d="M1.5 0.5h6v1.2h-1v2.8l1.8 1.8v1h-3v2.7h-1V7.3h-3v-1l1.8-1.8V1.7h-1z"/></svg>
<svg class="g" width="1084" height="953"><path d="M150.96 514.44 A24.10 24.10 0 1 1 185.04 514.44 L179.68 509.08 A16.97 16.97 0 1 0 153.01 512.39 Z" fill="#b9c41c"/><path d="M165.85 496.64 L184.68 514.79 L185.04 514.44 L167.28 495.24 A1.00 1.00 0 0 0 165.85 496.64 Z" fill="#666"/></svg>
<div class="ln" style="left:212.0px;top:526px"></div>
<div class="tt" style="left:218.0px;top:459.9px">Split IOs</div>
<div class="tv" style="left:218.0px;top:509.0px">0 #/s</div>
<svg class="ic" style="left:357.1px;top:513.7px" width="9" height="9" viewBox="0 0 9 9"><path fill-rule="evenodd" d="M7.72 3.40 L8.88 3.45 L8.88 5.55 L7.72 5.60 L7.55 6.00 L8.34 6.85 L6.85 8.34 L6.00 7.55 L5.60 7.72 L5.55 8.88 L3.45 8.88 L3.40 7.72 L3.00 7.55 L2.15 8.34 L0.66 6.85 L1.45 6.00 L1.28 5.60 L0.12 5.55 L0.12 3.45 L1.28 3.40 L1.45 3.00 L0.66 2.15 L2.15 0.66 L3.00 1.45 L3.40 1.28 L3.45 0.12 L5.55 0.12 L5.60 1.28 L6.00 1.45 L6.85 0.66 L8.34 2.15 L7.55 3.00 Z M6.00 4.50 A1.5 1.5 0 1 0 3.00 4.50 A1.5 1.5 0 1 0 6.00 4.50 Z"/></svg>
<svg class="ic" style="left:368.9px;top:512.9px" width="9" height="10" viewBox="0 0 9 10"><path d="M1.5 0.5h6v1.2h-1v2.8l1.8 1.8v1h-3v2.7h-1V7.3h-3v-1l1.8-1.8V1.7h-1z"/></svg>
<svg class="g" width="1084" height="953"><path d="M324.26 514.44 A24.10 24.10 0 1 1 358.34 514.44 L352.98 509.08 A16.97 16.97 0 1 0 326.31 512.39 Z" fill="#b9c41c"/><path d="M342.15 495.28 L323.28 513.40 L323.61 513.77 L343.49 496.76 A1.00 1.00 0 0 0 342.15 495.28 Z" fill="#666"/></svg>

<div class="hh" style="left:67.5px;top:602.7px">Channel</div>
<svg class="a" style="left:127px;top:610px" width="9" height="5" viewBox="0 0 9 5"><path d="M0 0H9L4.5 4.5z" fill="#1b1d3a"/></svg>
<div class="hh" style="left:284px;top:602.7px">ID</div>
<svg class="sort" width="10" height="13" viewBox="0 0 10 13" style="left:302.7px;top:601.8px"><path fill="#c8c8c8" d="M5 0.5L9.5 5.5H0.5z M0.5 7.5H9.5L5 12.5z"/></svg>
<div class="hh" style="letter-spacing:0.2px;right:667.8px;top:602.7px">Last</div>
<div class="hh" style="letter-spacing:0.25px;left:362.5px;top:620.1px">Value</div>
<svg class="sort" width="10" height="13" viewBox="0 0 10 13" style="left:404.3px;top:620.5px"><path fill="#c8c8c8" d="M5 0.5L9.5 5.5H0.5z M0.5 7.5H9.5L5 12.5z"/></svg>
<div class="hh" style="letter-spacing:0.6px;left:585.5px;top:602.7px">Minimum</div>
<svg class="sort" width="10" height="13" viewBox="0 0 10 13" style="left:652.8px;top:601.8px"><path fill="#c8c8c8" d="M5 0.5L9.5 5.5H0.5z M0.5 7.5H9.5L5 12.5z"/></svg>
<div class="hh" style="letter-spacing:0.65px;left:830px;top:602.7px">Maximum</div>
<svg class="sort" width="10" height="13" viewBox="0 0 10 13" style="left:900.8px;top:601.8px"><path fill="#c8c8c8" d="M5 0.5L9.5 5.5H0.5z M0.5 7.5H9.5L5 12.5z"/></svg>
<div class="tl" style="top:642px"></div>
<div class="rc" style="left:67.5px;top:659.3px">Avg. Bytes Per Read</div>
<div class="rr" style="right:769.0px;top:659.3px">4</div>
<div class="rr" style="right:667.5px;top:659.3px">2.304 #</div>
<div class="rr" style="right:419.0px;top:659.3px">2.304 #</div>
<div class="rr" style="right:170.5px;top:659.3px">25.468 #</div>
<svg class="cogs" width="20" height="18" viewBox="0 0 20 18" style="left:985px;top:655px"><path fill="#3d3d3d" fill-rule="evenodd" d="M17.92 6.58 L18.96 6.78 L18.96 8.02 L17.92 8.22 L17.76 8.85 L18.56 9.54 L17.94 10.62 L16.93 10.28 L16.48 10.73 L16.82 11.74 L15.74 12.36 L15.05 11.56 L14.42 11.72 L14.22 12.76 L12.98 12.76 L12.78 11.72 L12.15 11.56 L11.46 12.36 L10.38 11.74 L10.72 10.73 L10.27 10.28 L9.26 10.62 L8.64 9.54 L9.44 8.85 L9.28 8.22 L8.24 8.02 L8.24 6.78 L9.28 6.58 L9.44 5.95 L8.64 5.26 L9.26 4.18 L10.27 4.52 L10.72 4.07 L10.38 3.06 L11.46 2.44 L12.15 3.24 L12.78 3.08 L12.98 2.04 L14.22 2.04 L14.42 3.08 L15.05 3.24 L15.74 2.44 L16.82 3.06 L16.48 4.07 L16.93 4.52 L17.94 4.18 L18.56 5.26 L17.76 5.95 Z M15.70 7.40 A2.1 2.1 0 1 0 11.50 7.40 A2.1 2.1 0 1 0 15.70 7.40 Z M9.50 13.20 L10.25 13.35 L10.25 14.45 L9.50 14.60 L9.29 15.10 L9.72 15.74 L8.94 16.52 L8.30 16.09 L7.80 16.30 L7.65 17.05 L6.55 17.05 L6.40 16.30 L5.90 16.09 L5.26 16.52 L4.48 15.74 L4.91 15.10 L4.70 14.60 L3.95 14.45 L3.95 13.35 L4.70 13.20 L4.91 12.70 L4.48 12.06 L5.26 11.28 L5.90 11.71 L6.40 11.50 L6.55 10.75 L7.65 10.75 L7.80 11.50 L8.30 11.71 L8.94 11.28 L9.72 12.06 L9.29 12.70 Z M8.15 13.90 A1.05 1.05 0 1 0 6.05 13.90 A1.05 1.05 0 1 0 8.15 13.90 Z"/></svg>
<div class="tl" style="top:680px"></div>
<div class="rc" style="left:67.5px;top:697.3px">Avg. Bytes Per Transfer</div>
<div class="rr" style="right:769.0px;top:697.3px">5</div>
<div class="rr" style="right:667.5px;top:697.3px">3.281 #</div>
<div class="rr" style="right:419.0px;top:697.3px">3.281 #</div>
<div class="rr" style="right:170.5px;top:697.3px">19.922 #</div>
<svg class="cogs" width="20" height="18" viewBox="0 0 20 18" style="left:985px;top:693px"><path fill="#3d3d3d" fill-rule="evenodd" d="M17.92 6.58 L18.96 6.78 L18.96 8.02 L17.92 8.22 L17.76 8.85 L18.56 9.54 L17.94 10.62 L16.93 10.28 L16.48 10.73 L16.82 11.74 L15.74 12.36 L15.05 11.56 L14.42 11.72 L14.22 12.76 L12.98 12.76 L12.78 11.72 L12.15 11.56 L11.46 12.36 L10.38 11.74 L10.72 10.73 L10.27 10.28 L9.26 10.62 L8.64 9.54 L9.44 8.85 L9.28 8.22 L8.24 8.02 L8.24 6.78 L9.28 6.58 L9.44 5.95 L8.64 5.26 L9.26 4.18 L10.27 4.52 L10.72 4.07 L10.38 3.06 L11.46 2.44 L12.15 3.24 L12.78 3.08 L12.98 2.04 L14.22 2.04 L14.42 3.08 L15.05 3.24 L15.74 2.44 L16.82 3.06 L16.48 4.07 L16.93 4.52 L17.94 4.18 L18.56 5.26 L17.76 5.95 Z M15.70 7.40 A2.1 2.1 0 1 0 11.50 7.40 A2.1 2.1 0 1 0 15.70 7.40 Z M9.50 13.20 L10.25 13.35 L10.25 14.45 L9.50 14.60 L9.29 15.10 L9.72 15.74 L8.94 16.52 L8.30 16.09 L7.80 16.30 L7.65 17.05 L6.55 17.05 L6.40 16.30 L5.90 16.09 L5.26 16.52 L4.48 15.74 L4.91 15.10 L4.70 14.60 L3.95 14.45 L3.95 13.35 L4.70 13.20 L4.91 12.70 L4.48 12.06 L5.26 11.28 L5.90 11.71 L6.40 11.50 L6.55 10.75 L7.65 10.75 L7.80 11.50 L8.30 11.71 L8.94 11.28 L9.72 12.06 L9.29 12.70 Z M8.15 13.90 A1.05 1.05 0 1 0 6.05 13.90 A1.05 1.05 0 1 0 8.15 13.90 Z"/></svg>
<div class="tl" style="top:718px"></div>
<div class="rc" style="left:67.5px;top:735.3px">Avg. Bytes Per Write</div>
<div class="rr" style="right:769.0px;top:735.3px">6</div>
<div class="rr" style="right:667.5px;top:735.3px">3.848 #</div>
<div class="rr" style="right:419.0px;top:735.3px">3.848 #</div>
<div class="rr" style="right:170.5px;top:735.3px">7.893 #</div>
<svg class="cogs" width="20" height="18" viewBox="0 0 20 18" style="left:985px;top:731px"><path fill="#3d3d3d" fill-rule="evenodd" d="M17.92 6.58 L18.96 6.78 L18.96 8.02 L17.92 8.22 L17.76 8.85 L18.56 9.54 L17.94 10.62 L16.93 10.28 L16.48 10.73 L16.82 11.74 L15.74 12.36 L15.05 11.56 L14.42 11.72 L14.22 12.76 L12.98 12.76 L12.78 11.72 L12.15 11.56 L11.46 12.36 L10.38 11.74 L10.72 10.73 L10.27 10.28 L9.26 10.62 L8.64 9.54 L9.44 8.85 L9.28 8.22 L8.24 8.02 L8.24 6.78 L9.28 6.58 L9.44 5.95 L8.64 5.26 L9.26 4.18 L10.27 4.52 L10.72 4.07 L10.38 3.06 L11.46 2.44 L12.15 3.24 L12.78 3.08 L12.98 2.04 L14.22 2.04 L14.42 3.08 L15.05 3.24 L15.74 2.44 L16.82 3.06 L16.48 4.07 L16.93 4.52 L17.94 4.18 L18.56 5.26 L17.76 5.95 Z M15.70 7.40 A2.1 2.1 0 1 0 11.50 7.40 A2.1 2.1 0 1 0 15.70 7.40 Z M9.50 13.20 L10.25 13.35 L10.25 14.45 L9.50 14.60 L9.29 15.10 L9.72 15.74 L8.94 16.52 L8.30 16.09 L7.80 16.30 L7.65 17.05 L6.55 17.05 L6.40 16.30 L5.90 16.09 L5.26 16.52 L4.48 15.74 L4.91 15.10 L4.70 14.60 L3.95 14.45 L3.95 13.35 L4.70 13.20 L4.91 12.70 L4.48 12.06 L5.26 11.28 L5.90 11.71 L6.40 11.50 L6.55 10.75 L7.65 10.75 L7.80 11.50 L8.30 11.71 L8.94 11.28 L9.72 12.06 L9.29 12.70 Z M8.15 13.90 A1.05 1.05 0 1 0 6.05 13.90 A1.05 1.05 0 1 0 8.15 13.90 Z"/></svg>
<div class="tl" style="top:756px"></div>
<div class="rc" style="left:67.5px;top:773.3px">Avg. Queue</div>
<div class="rr" style="right:769.0px;top:773.3px">8</div>
<div class="rr" style="right:667.5px;top:773.3px">0,01 #</div>
<div class="rr" style="right:419.0px;top:773.3px">0,01 #</div>
<div class="rr" style="right:170.5px;top:773.3px">0,02 #</div>
<svg class="cogs" width="20" height="18" viewBox="0 0 20 18" style="left:985px;top:769px"><path fill="#3d3d3d" fill-rule="evenodd" d="M17.92 6.58 L18.96 6.78 L18.96 8.02 L17.92 8.22 L17.76 8.85 L18.56 9.54 L17.94 10.62 L16.93 10.28 L16.48 10.73 L16.82 11.74 L15.74 12.36 L15.05 11.56 L14.42 11.72 L14.22 12.76 L12.98 12.76 L12.78 11.72 L12.15 11.56 L11.46 12.36 L10.38 11.74 L10.72 10.73 L10.27 10.28 L9.26 10.62 L8.64 9.54 L9.44 8.85 L9.28 8.22 L8.24 8.02 L8.24 6.78 L9.28 6.58 L9.44 5.95 L8.64 5.26 L9.26 4.18 L10.27 4.52 L10.72 4.07 L10.38 3.06 L11.46 2.44 L12.15 3.24 L12.78 3.08 L12.98 2.04 L14.22 2.04 L14.42 3.08 L15.05 3.24 L15.74 2.44 L16.82 3.06 L16.48 4.07 L16.93 4.52 L17.94 4.18 L18.56 5.26 L17.76 5.95 Z M15.70 7.40 A2.1 2.1 0 1 0 11.50 7.40 A2.1 2.1 0 1 0 15.70 7.40 Z M9.50 13.20 L10.25 13.35 L10.25 14.45 L9.50 14.60 L9.29 15.10 L9.72 15.74 L8.94 16.52 L8.30 16.09 L7.80 16.30 L7.65 17.05 L6.55 17.05 L6.40 16.30 L5.90 16.09 L5.26 16.52 L4.48 15.74 L4.91 15.10 L4.70 14.60 L3.95 14.45 L3.95 13.35 L4.70 13.20 L4.91 12.70 L4.48 12.06 L5.26 11.28 L5.90 11.71 L6.40 11.50 L6.55 10.75 L7.65 10.75 L7.80 11.50 L8.30 11.71 L8.94 11.28 L9.72 12.06 L9.29 12.70 Z M8.15 13.90 A1.05 1.05 0 1 0 6.05 13.90 A1.05 1.05 0 1 0 8.15 13.90 Z"/></svg>
<div class="tl" style="top:794px"></div>
<div class="rc" style="left:67.5px;top:811.3px">Avg. Read Queue</div>
<div class="rr" style="right:769.0px;top:811.3px">7</div>
<div class="rr" style="right:667.5px;top:811.3px">&lt; 0,01 #</div>
<div class="rr" style="right:419.0px;top:811.3px">&lt; 0,01 #</div>
<div class="rr" style="right:170.5px;top:811.3px">0,02 #</div>
<svg class="cogs" width="20" height="18" viewBox="0 0 20 18" style="left:985px;top:807px"><path fill="#3d3d3d" fill-rule="evenodd" d="M17.92 6.58 L18.96 6.78 L18.96 8.02 L17.92 8.22 L17.76 8.85 L18.56 9.54 L17.94 10.62 L16.93 10.28 L16.48 10.73 L16.82 11.74 L15.74 12.36 L15.05 11.56 L14.42 11.72 L14.22 12.76 L12.98 12.76 L12.78 11.72 L12.15 11.56 L11.46 12.36 L10.38 11.74 L10.72 10.73 L10.27 10.28 L9.26 10.62 L8.64 9.54 L9.44 8.85 L9.28 8.22 L8.24 8.02 L8.24 6.78 L9.28 6.58 L9.44 5.95 L8.64 5.26 L9.26 4.18 L10.27 4.52 L10.72 4.07 L10.38 3.06 L11.46 2.44 L12.15 3.24 L12.78 3.08 L12.98 2.04 L14.22 2.04 L14.42 3.08 L15.05 3.24 L15.74 2.44 L16.82 3.06 L16.48 4.07 L16.93 4.52 L17.94 4.18 L18.56 5.26 L17.76 5.95 Z M15.70 7.40 A2.1 2.1 0 1 0 11.50 7.40 A2.1 2.1 0 1 0 15.70 7.40 Z M9.50 13.20 L10.25 13.35 L10.25 14.45 L9.50 14.60 L9.29 15.10 L9.72 15.74 L8.94 16.52 L8.30 16.09 L7.80 16.30 L7.65 17.05 L6.55 17.05 L6.40 16.30 L5.90 16.09 L5.26 16.52 L4.48 15.74 L4.91 15.10 L4.70 14.60 L3.95 14.45 L3.95 13.35 L4.70 13.20 L4.91 12.70 L4.48 12.06 L5.26 11.28 L5.90 11.71 L6.40 11.50 L6.55 10.75 L7.65 10.75 L7.80 11.50 L8.30 11.71 L8.94 11.28 L9.72 12.06 L9.29 12.70 Z M8.15 13.90 A1.05 1.05 0 1 0 6.05 13.90 A1.05 1.05 0 1 0 8.15 13.90 Z"/></svg>
<div class="tl" style="top:832px"></div>
<div class="rc" style="left:67.5px;top:849.3px">Avg. Read Time</div>
<div class="rr" style="right:769.0px;top:849.3px">10</div>
<div class="rr" style="right:667.5px;top:849.3px">0 msec</div>
<div class="rr" style="right:419.0px;top:849.3px">0 msec</div>
<div class="rr" style="right:170.5px;top:849.3px">0 msec</div>
<svg class="cogs" width="20" height="18" viewBox="0 0 20 18" style="left:985px;top:845px"><path fill="#3d3d3d" fill-rule="evenodd" d="M17.92 6.58 L18.96 6.78 L18.96 8.02 L17.92 8.22 L17.76 8.85 L18.56 9.54 L17.94 10.62 L16.93 10.28 L16.48 10.73 L16.82 11.74 L15.74 12.36 L15.05 11.56 L14.42 11.72 L14.22 12.76 L12.98 12.76 L12.78 11.72 L12.15 11.56 L11.46 12.36 L10.38 11.74 L10.72 10.73 L10.27 10.28 L9.26 10.62 L8.64 9.54 L9.44 8.85 L9.28 8.22 L8.24 8.02 L8.24 6.78 L9.28 6.58 L9.44 5.95 L8.64 5.26 L9.26 4.18 L10.27 4.52 L10.72 4.07 L10.38 3.06 L11.46 2.44 L12.15 3.24 L12.78 3.08 L12.98 2.04 L14.22 2.04 L14.42 3.08 L15.05 3.24 L15.74 2.44 L16.82 3.06 L16.48 4.07 L16.93 4.52 L17.94 4.18 L18.56 5.26 L17.76 5.95 Z M15.70 7.40 A2.1 2.1 0 1 0 11.50 7.40 A2.1 2.1 0 1 0 15.70 7.40 Z M9.50 13.20 L10.25 13.35 L10.25 14.45 L9.50 14.60 L9.29 15.10 L9.72 15.74 L8.94 16.52 L8.30 16.09 L7.80 16.30 L7.65 17.05 L6.55 17.05 L6.40 16.30 L5.90 16.09 L5.26 16.52 L4.48 15.74 L4.91 15.10 L4.70 14.60 L3.95 14.45 L3.95 13.35 L4.70 13.20 L4.91 12.70 L4.48 12.06 L5.26 11.28 L5.90 11.71 L6.40 11.50 L6.55 10.75 L7.65 10.75 L7.80 11.50 L8.30 11.71 L8.94 11.28 L9.72 12.06 L9.29 12.70 Z M8.15 13.90 A1.05 1.05 0 1 0 6.05 13.90 A1.05 1.05 0 1 0 8.15 13.90 Z"/></svg>
<div class="tl" style="top:870px"></div>
<div class="rc" style="left:67.5px;top:887.3px">Avg. Transfer Time</div>
<div class="rr" style="right:769.0px;top:887.3px">11</div>
<div class="rr" style="right:667.5px;top:887.3px">0 msec</div>
<div class="rr" style="right:419.0px;top:887.3px">0 msec</div>
<div class="rr" style="right:170.5px;top:887.3px">0 msec</div>
<svg class="cogs" width="20" height="18" viewBox="0 0 20 18" style="left:985px;top:883px"><path fill="#3d3d3d" fill-rule="evenodd" d="M17.92 6.58 L18.96 6.78 L18.96 8.02 L17.92 8.22 L17.76 8.85 L18.56 9.54 L17.94 10.62 L16.93 10.28 L16.48 10.73 L16.82 11.74 L15.74 12.36 L15.05 11.56 L14.42 11.72 L14.22 12.76 L12.98 12.76 L12.78 11.72 L12.15 11.56 L11.46 12.36 L10.38 11.74 L10.72 10.73 L10.27 10.28 L9.26 10.62 L8.64 9.54 L9.44 8.85 L9.28 8.22 L8.24 8.02 L8.24 6.78 L9.28 6.58 L9.44 5.95 L8.64 5.26 L9.26 4.18 L10.27 4.52 L10.72 4.07 L10.38 3.06 L11.46 2.44 L12.15 3.24 L12.78 3.08 L12.98 2.04 L14.22 2.04 L14.42 3.08 L15.05 3.24 L15.74 2.44 L16.82 3.06 L16.48 4.07 L16.93 4.52 L17.94 4.18 L18.56 5.26 L17.76 5.95 Z M15.70 7.40 A2.1 2.1 0 1 0 11.50 7.40 A2.1 2.1 0 1 0 15.70 7.40 Z M9.50 13.20 L10.25 13.35 L10.25 14.45 L9.50 14.60 L9.29 15.10 L9.72 15.74 L8.94 16.52 L8.30 16.09 L7.80 16.30 L7.65 17.05 L6.55 17.05 L6.40 16.30 L5.90 16.09 L5.26 16.52 L4.48 15.74 L4.91 15.10 L4.70 14.60 L3.95 14.45 L3.95 13.35 L4.70 13.20 L4.91 12.70 L4.48 12.06 L5.26 11.28 L5.90 11.71 L6.40 11.50 L6.55 10.75 L7.65 10.75 L7.80 11.50 L8.30 11.71 L8.94 11.28 L9.72 12.06 L9.29 12.70 Z M8.15 13.90 A1.05 1.05 0 1 0 6.05 13.90 A1.05 1.05 0 1 0 8.15 13.90 Z"/></svg>
<div class="tl" style="top:908px"></div>
<div class="rc" style="left:67.5px;top:925.3px">Avg. Write Queue</div>
<div class="rr" style="right:769.0px;top:925.3px">9</div>
<div class="rr" style="right:667.5px;top:925.3px">&lt; 0,01 #</div>
<div class="rr" style="right:419.0px;top:925.3px">&lt; 0,01 #</div>
<div class="rr" style="right:170.5px;top:925.3px">&lt; 0,01 #</div>
<svg class="cogs" width="20" height="18" viewBox="0 0 20 18" style="left:985px;top:921px"><path fill="#3d3d3d" fill-rule="evenodd" d="M17.92 6.58 L18.96 6.78 L18.96 8.02 L17.92 8.22 L17.76 8.85 L18.56 9.54 L17.94 10.62 L16.93 10.28 L16.48 10.73 L16.82 11.74 L15.74 12.36 L15.05 11.56 L14.42 11.72 L14.22 12.76 L12.98 12.76 L12.78 11.72 L12.15 11.56 L11.46 12.36 L10.38 11.74 L10.72 10.73 L10.27 10.28 L9.26 10.62 L8.64 9.54 L9.44 8.85 L9.28 8.22 L8.24 8.02 L8.24 6.78 L9.28 6.58 L9.44 5.95 L8.64 5.26 L9.26 4.18 L10.27 4.52 L10.72 4.07 L10.38 3.06 L11.46 2.44 L12.15 3.24 L12.78 3.08 L12.98 2.04 L14.22 2.04 L14.42 3.08 L15.05 3.24 L15.74 2.44 L16.82 3.06 L16.48 4.07 L16.93 4.52 L17.94 4.18 L18.56 5.26 L17.76 5.95 Z M15.70 7.40 A2.1 2.1 0 1 0 11.50 7.40 A2.1 2.1 0 1 0 15.70 7.40 Z M9.50 13.20 L10.25 13.35 L10.25 14.45 L9.50 14.60 L9.29 15.10 L9.72 15.74 L8.94 16.52 L8.30 16.09 L7.80 16.30 L7.65 17.05 L6.55 17.05 L6.40 16.30 L5.90 16.09 L5.26 16.52 L4.48 15.74 L4.91 15.10 L4.70 14.60 L3.95 14.45 L3.95 13.35 L4.70 13.20 L4.91 12.70 L4.48 12.06 L5.26 11.28 L5.90 11.71 L6.40 11.50 L6.55 10.75 L7.65 10.75 L7.80 11.50 L8.30 11.71 L8.94 11.28 L9.72 12.06 L9.29 12.70 Z M8.15 13.90 A1.05 1.05 0 1 0 6.05 13.90 A1.05 1.05 0 1 0 8.15 13.90 Z"/></svg>
<div class="tl" style="top:946px"></div>
</body></html>
